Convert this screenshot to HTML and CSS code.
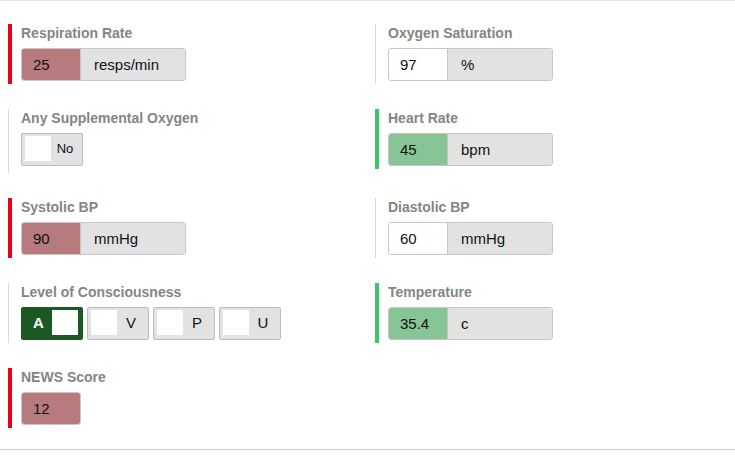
FILE: index.html
```html
<!DOCTYPE html>
<html>
<head>
<meta charset="utf-8">
<link rel="stylesheet" href="styles.css">
</head>
<body>
<div class="panel">
  <div class="grid">
    <div class="field alert">
      <div class="label">Respiration Rate</div>
      <div class="group"><span class="value bad">25</span><span class="unit">resps/min</span></div>
    </div>
    <div class="field">
      <div class="label">Oxygen Saturation</div>
      <div class="group"><span class="value">97</span><span class="unit">%</span></div>
    </div>

    <div class="field tall">
      <div class="label">Any Supplemental Oxygen</div>
      <div class="toggle"><span class="knob"></span><span class="toggle-text small">No</span></div>
    </div>
    <div class="field ok">
      <div class="label">Heart Rate</div>
      <div class="group"><span class="value good">45</span><span class="unit">bpm</span></div>
    </div>

    <div class="field alert">
      <div class="label">Systolic BP</div>
      <div class="group"><span class="value bad">90</span><span class="unit">mmHg</span></div>
    </div>
    <div class="field">
      <div class="label">Diastolic BP</div>
      <div class="group"><span class="value">60</span><span class="unit">mmHg</span></div>
    </div>

    <div class="field">
      <div class="label">Level of Consciousness</div>
      <div class="toggles">
        <div class="toggle on"><span class="knob"></span><span class="toggle-text">A</span></div>
        <div class="toggle"><span class="knob"></span><span class="toggle-text">V</span></div>
        <div class="toggle"><span class="knob"></span><span class="toggle-text">P</span></div>
        <div class="toggle"><span class="knob"></span><span class="toggle-text">U</span></div>
      </div>
    </div>
    <div class="field ok">
      <div class="label">Temperature</div>
      <div class="group"><span class="value good">35.4</span><span class="unit">c</span></div>
    </div>

    <div class="field alert">
      <div class="label">NEWS Score</div>
      <div class="group single"><span class="value bad">12</span></div>
    </div>
  </div>
</div>
</body>
</html>
```

FILE: styles.css
```css
html, body {
  margin: 0;
  padding: 0;
  background: #ffffff;
}

body {
  font-family: "Liberation Sans", Arial, Helvetica, sans-serif;
  color: #111111;
}

.panel {
  border-top: 1px solid #e4e4e4;
  border-bottom: 1px solid #cfcfcf;
  padding: 23px 8px 21px 8px;
}

.grid {
  display: grid;
  grid-template-columns: 367px 1fr;
  row-gap: 25px;
  align-items: start;
}

.field {
  box-sizing: border-box;
  height: 60px;
  border-left: 1px solid #d9d9d9;
  padding: 0 0 3px 12px;
}

.field.tall {
  height: 64px;
}

.field.alert {
  border-left: 4px solid #e8001c;
  padding-left: 9px;
}

.field.ok {
  border-left: 4px solid #3cc465;
  padding-left: 9px;
}

.label {
  font-size: 14px;
  line-height: 19px;
  font-weight: bold;
  color: #858585;
  margin-bottom: 5px;
  white-space: nowrap;
}

.group {
  box-sizing: border-box;
  display: flex;
  width: 165px;
  height: 33px;
  border: 1px solid #c6c6c6;
  border-radius: 3px;
  overflow: hidden;
  font-size: 15px;
  line-height: 31px;
}

.group.single {
  width: 60px;
}

.value {
  box-sizing: border-box;
  flex: 0 0 59px;
  padding-left: 11px;
  background: #ffffff;
  border-right: 1px solid #c6c6c6;
  color: #111111;
}

.group.single .value {
  flex: 1 1 auto;
  border-right: none;
}

.value.bad {
  background: #b77a7d;
}

.value.good {
  background: #87c496;
}

.unit {
  flex: 1 1 auto;
  padding-left: 13px;
  background: #e2e2e2;
  color: #111111;
}

.toggles {
  display: flex;
  gap: 4px;
}

.toggle {
  box-sizing: border-box;
  display: flex;
  align-items: flex-start;
  width: 62px;
  height: 33px;
  padding: 2px 3px;
  border: 1px solid #bdbdbd;
  border-radius: 2px;
  background: #e2e2e2;
}

.knob {
  flex: 0 0 26px;
  height: 25px;
  background: #ffffff;
}

.toggle-text {
  flex: 1 1 auto;
  text-align: center;
  font-size: 15px;
  line-height: 25px;
  color: #111111;
}

.toggle-text.small {
  font-size: 13px;
}

.toggle.on {
  flex-direction: row-reverse;
  background: #1c5922;
  border-color: #1c5922;
  padding-right: 4px;
}

.toggle.on .toggle-text {
  color: #ffffff;
  font-weight: bold;
}
```
